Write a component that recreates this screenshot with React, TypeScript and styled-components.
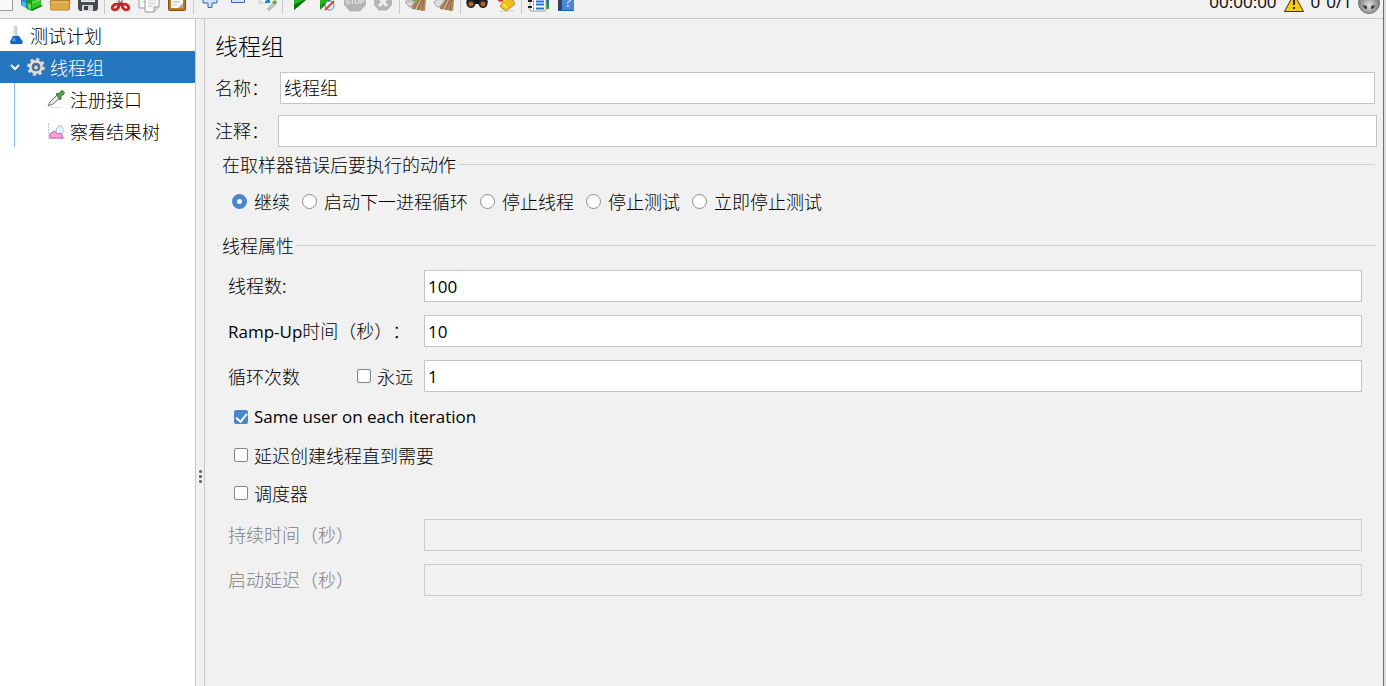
import React, { ReactNode, useState } from "react";
import styled, { createGlobalStyle } from "styled-components";

const GlobalStyle = createGlobalStyle`
  * { box-sizing: border-box; }
  body { margin: 0; background: #f1f1f1; }
  body, button, input {
    font-family: "Noto Sans CJK SC", sans-serif;
    font-size: 18px;
    font-weight: 300;
    color: #000;
    text-spacing-trim: space-all;
  }
`;

const latin = `"Open Sans", "Noto Sans CJK SC", sans-serif`;

const Frame = styled.div`
  display: flex;
  min-height: 100vh;
  background: #dcdcdc;
  padding-right: 2px;
`;
const Window = styled.div`
  flex: 1;
  min-width: 0;
  display: flex;
  flex-direction: column;
  background: #f1f1f1;
  border-right: 1px solid #6e6e6e;
`;
const Toolbar = styled.header`
  display: flex;
  align-items: flex-end;
  height: 19px;
  overflow: hidden;
  border-bottom: 1px solid #c8c8c8;
  padding-right: 3px;
`;
const Tools = styled.div`
  display: flex;
  align-items: flex-end;
  margin-left: -10px;
  padding-bottom: 4px;
`;
const ToolButton = styled.button`
  display: block;
  width: 28px;
  height: 28px;
  padding: 0;
  border: 0;
  background: none;
  svg { display: block; }
`;
const Separator = styled.span`
  width: 1px;
  height: 28px;
  margin: 0 2px;
  background: #c9c9c9;
`;
const Status = styled.div`
  display: flex;
  align-items: flex-end;
  gap: 6px;
  margin-left: auto;
  font-family: ${latin};
  font-size: 17px;
  font-weight: 400;
  line-height: 24px;
  padding-bottom: 4px;
  svg { display: block; }
`;

const Body = styled.div`
  flex: 1;
  display: flex;
`;
const Sidebar = styled.nav`
  width: 196px;
  flex: none;
  background: #fff;
  border-right: 1px solid #c8c8c8;
`;
const TreeItem = styled.a<{ $level: number; $selected?: boolean }>`
  display: flex;
  align-items: center;
  height: 32px;
  gap: 4px;
  padding-left: ${(p) => p.$level}px;
  text-decoration: none;
  color: ${(p) => (p.$selected ? "#fff" : "#000")};
  background: ${(p) => (p.$selected ? "#2675bf" : "transparent")};
  svg { flex: none; }
`;
const TreeBranch = styled.div`
  margin-left: 14px;
  border-left: 1px solid #7fbdee;
`;
const Splitter = styled.div`
  flex: none;
  width: 9px;
  border-right: 1px solid #c8c8c8;
  display: flex;
  flex-direction: column;
  align-items: center;
  justify-content: center;
  gap: 2px;
  padding-top: 248px;
`;
const Dot = styled.span`
  width: 3px;
  height: 3px;
  border-radius: 1px;
  background: #6e6e6e;
`;

const Main = styled.main`
  flex: 1;
  min-width: 0;
  padding: 12px 6px 0 10px;
`;
const Title = styled.h1`
  margin: 0 0 13px;
  font-size: 23px;
  line-height: 28px;
  font-weight: 300;
`;
const HeadRow = styled.div<{ $inset: number }>`
  display: grid;
  grid-template-columns: 63px 1fr;
  align-items: center;
  margin-bottom: 11px;
  label { padding-bottom: 2px; }
  input { margin: 0 ${(p) => p.$inset}px; }
`;
const TextInput = styled.input`
  min-width: 0;
  height: 32px;
  padding: 0 3px 2px;
  border: 1px solid #c4c4c4;
  border-radius: 0;
  background: #fff;
  outline: none;
  &:disabled { background: #f1f1f1; border-color: #cdcdcd; }
`;
const NumberInput = styled(TextInput)`
  padding-bottom: 0;
  font-family: ${latin};
  font-size: 17px;
  font-weight: 400;
`;
const Group = styled.fieldset<{ $top: number }>`
  min-width: 0;
  margin: ${(p) => p.$top}px 2px 0;
  padding: 13px 13px 0 11px;
  border: 0;
  border-top: 1px solid #d0d0d0;
  legend {
    margin-left: -9px;
    padding: 0 3px;
    line-height: 24px;
  }
`;
const Radios = styled.div`
  display: flex;
  flex-wrap: wrap;
  gap: 12px;
  padding-left: 4px;
`;
const Choice = styled.label<{ $gap: number }>`
  display: flex;
  align-items: center;
  gap: ${(p) => p.$gap}px;
  line-height: 24px;
  white-space: nowrap;
`;
const Radio = styled.input.attrs({ type: "radio" })`
  appearance: none;
  width: 15px;
  height: 15px;
  margin: 0;
  border: 1px solid #8c8c8c;
  border-radius: 50%;
  background: #fff;
  &:checked { border: 5px solid #4a87cb; }
`;
const Check = styled.input.attrs({ type: "checkbox" })`
  appearance: none;
  width: 14px;
  height: 14px;
  margin: 0;
  border: 1px solid #858585;
  border-radius: 2px;
  background: #fff;
  &:checked {
    border-color: #4a87cb;
    background: #4a87cb;
    display: grid;
    place-items: center;
  }
  &:checked::before {
    content: "";
    width: 5px;
    height: 9px;
    margin-bottom: 3px;
    border: solid #fff;
    border-width: 0 2px 2px 0;
    transform: rotate(40deg);
  }
`;
const Field = styled.div<{ $disabled?: boolean }>`
  display: grid;
  grid-template-columns: 196px 1fr;
  align-items: center;
  color: ${(p) => (p.$disabled ? "#808080" : "#000")};
  > label { padding-bottom: 2px; }
`;
const Fields = styled.div`
  display: grid;
  gap: 13px;
`;
const LoopLabel = styled.div`
  display: flex;
  justify-content: space-between;
  padding-right: 11px;
`;
const Checks = styled.div`
  display: grid;
  grid-auto-rows: 38px;
  justify-content: start;
  margin: 6px 0 7px;
  padding-left: 6px;
`;
const Latin = styled.span`
  font-family: ${latin};
  font-size: 17px;
  font-weight: 400;
`;

/* Toolbar drawings share a 28px square whose bottom edge is y = 14. */
const Art = ({ children }: { children: ReactNode }) => (
  <svg width="28" height="28" viewBox="0 -14 28 28" aria-hidden="true">{children}</svg>
);

const Page = ({ x, y }: { x: number; y: number }) => (
  <g>
    <path d={`M${x} ${y}h14v11l-5 5h-9z`} fill="#fafafa" stroke="#9b9b9b" />
    <path d={`M${x + 14} ${y + 11}h-5v5`} fill="#dedede" stroke="#9b9b9b" />
    <path d={`M${x + 3} ${y + 4}h8M${x + 3} ${y + 7}h8M${x + 3} ${y + 10}h5`} stroke="#c4c4c4" />
  </g>
);

const Broom = () => (
  <g>
    <path d="M10 3C13 3 14 0 15-2l10-1c-2 5-1 9-2 14l-13-2c-1-2-1-4 0-6z" fill="#b58a62" />
    <path d="M12 9c1-3 4-7 6-11M16 10c1-3 3-7 4-11M20 11c0-3 1-8 2-12" stroke="#8a6644" fill="none" />
    <path d="M14 9c1-3 3-6 5-10" stroke="#dec09b" fill="none" />
  </g>
);

const icons: Record<string, ReactNode> = {
  new: <path d="M4.500 -11h18V10.500H4.500z" fill="#fafafa" stroke="#9b9b9b" />,
  templates: (
    <g>
      <path d="M3-8h7V9L3 5z" fill="#1f86d6" /><path d="M4 1l4 2v5L4 5z" fill="#54b4f2" />
      <path d="M8-8h6v19l-5-2z" fill="#129a1c" /><path d="M10 3l3 1v6l-3-2z" fill="#64df4c" />
      <path d="M14-8h9V5l-9 6z" fill="#35c329" /><path d="M23 5l2 1-11 5v-2z" fill="#18801a" />
      <path d="M14 3l8-3" stroke="#87e96c" />
    </g>
  ),
  open: (
    <g>
      <path d="M4-6h8l2 3h10V9H6z" fill="#b27c25" /><path d="M4 1h20l-1 9H5z" fill="#dfa94a" stroke="#b8862e" />
      <path d="M5 2h18" stroke="#f2cc7c" />
    </g>
  ),
  save: (
    <g>
      <path d="M4-9h20V9l-2 2H6L4 9z" fill="#444b51" /><path d="M7-8h14v10H7z" fill="#eceff0" />
      <path d="M8 5h11v6H8z" fill="#cfd3d5" /><path d="M10 6h4v4h-4z" fill="#3c4247" /><path d="M8 0h12" stroke="#b7b7b7" />
    </g>
  ),
  cut: (
    <g>
      <path d="M8-12l8 14-3 2zM19-12L11 2l3 2z" fill="#c3c8cc" stroke="#858b90" />
      <ellipse cx="8.500" cy="7" rx="3.500" ry="2.500" transform="rotate(-35 8.500 7)" fill="#fff" stroke="#d3202a" strokeWidth="3" />
      <ellipse cx="18.500" cy="7" rx="3.500" ry="2.500" transform="rotate(35 18.500 7)" fill="#fff" stroke="#d3202a" strokeWidth="3" />
      <path d="M10 4l3-2h1l3 2-3 2h-1z" fill="#d3202a" />
    </g>
  ),
  copy: <g><Page x={4} y={-8} /><Page x={10} y={-4} /></g>,
  paste: (
    <g>
      <rect x="5.500" y="-10" width="17" height="20.500" rx="1" fill="#b97a22" stroke="#80500f" />
      <path d="M8-7h12V8H8z" fill="#f8f8f8" /><path d="M20 3v5h-5z" fill="#aaa" />
      <path d="M10-1h7M10 2h7M10 5h4" stroke="#bbb" />
    </g>
  ),
  plus: <path d="M12-7h4v6h5v4h-5v4.500h-4V3H7v-4h5z" fill="#cfe2f7" stroke="#3069ad" />,
  minus: <path d="M7.500-1.500h13v4h-13z" fill="#cfe2f7" stroke="#3069ad" />,
  toggle: (
    <g>
      <path d="M4-2l9-3 5 5-5 4z" fill="#f7f7f7" stroke="#c6c6c6" /><path d="M6 2l4 2" stroke="#aaa" strokeDasharray="2 1" />
      <path d="M12-3l4 4M17-2v4h-4" stroke="#1689d9" strokeWidth="2" fill="none" />
      <path d="M23 3l-7 7" stroke="#a0a8a0" strokeWidth="3" /><path d="M22 4l-5 5" stroke="#e3ece2" />
      <path d="M20 2l3 3 2-3-2-2z" fill="#5ca84c" />
    </g>
  ),
  start: <g><path d="M9-10L22 -1 9 10z" fill="#139411" /><path d="M9-7l9 7-9 5z" fill="#29b522" /><path d="M9 10V5l13-6z" fill="#087106" /></g>,
  startNoPause: (
    <g>
      <path d="M7-10L19-1 7 10z" fill="#139411" /><path d="M7-7l9 7-9 5z" fill="#29b522" />
      <circle cx="16.500" cy="5.500" r="4.500" fill="#edf3fa" stroke="#577eaf" /><path d="M12 10l9-9" stroke="#d94242" strokeWidth="2" />
    </g>
  ),
  stop: (
    <g>
      <path d="M9-10h10l6 6v9l-6 6.500H9L3 5v-9z" fill="#b4b4b4" />
      <text x="14" y="4" textAnchor="middle" fontFamily="Liberation Sans" fontWeight="700" fontSize="7" fill="#e8e8e8">STOP</text>
    </g>
  ),
  shutdown: (
    <g>
      <path d="M10-8h8l5 5v8l-5 5.500h-8L5 5v-8z" fill="#b4b4b4" />
      <path d="M10-2l8 8M18-2l-8 8" stroke="#eee" strokeWidth="3" />
    </g>
  ),
  clear: (
    <g>
      <Broom /><path d="M4 1h8v2l-3 4c-3 0-3-2-5-4z" fill="#d9d9d9" stroke="#999" />
      <path d="M10-2h6v3h-5z" fill="#4ac62f" />
    </g>
  ),
  clearAll: (
    <g><Broom /><path d="M4 2l6-4 5 1-2 4-4 4c-3 0-4-2-5-5z" fill="#dedede" stroke="#aaa" /></g>
  ),
  search: (
    <g>
      <path d="M5-6h7l2 4 2-4h7l2 9H3z" fill="#35352f" /><path d="M11 0h6v4h-6z" fill="#111" />
      <circle cx="8" cy="3.500" r="4.500" fill="#222" /><circle cx="20" cy="3.500" r="4.500" fill="#222" />
      <circle cx="8" cy="4" r="2.500" fill="#a9662c" /><circle cx="20" cy="4" r="2.500" fill="#a9662c" />
    </g>
  ),
  resetSearch: (
    <g>
      <path d="M9 11h14" stroke="#ccc" strokeWidth="1" />
      <path d="M11 -1L18-8c3 4 3 8 6 12L15 11c-2-2-4-2-6-5 2-2 3-4 2-7z" fill="#efbd22" stroke="#c88910" />
      <path d="M12 4c1 1 3 3 4 4M13 1l6-6" stroke="#ffe24d" strokeWidth="2" fill="none" />
      <path d="M7 0l4-2 1 3-4 1z" fill="#dc2f2f" />
    </g>
  ),
  functions: (
    <g>
      <path d="M20-8h5V9h-5z" fill="#2c9d31" /><path d="M22-4h3v8h-3z" fill="#2669c9" />
      <rect x="6" y="-9" width="16" height="20" rx="1" fill="#fff" stroke="#999" />
      <path d="M4 1h4M4 7h4" stroke="#222" strokeWidth="2" />
      <path d="M9 1.500h1M9 4.500h1M9 8.500h1M12 1.500h8M12 4.500h8M12 8.500h8" stroke="#1e73dc" strokeWidth="2" />
    </g>
  ),
  help: (
    <g>
      <path d="M6-10h16v21H6z" fill="#4587d9" /><path d="M6-10h4v21H6z" fill="#344353" /><path d="M6 10.500h16" stroke="#2461aa" />
      <text x="16" y="7" textAnchor="middle" fontFamily="Liberation Serif" fontSize="14" fill="#fff">?</text>
    </g>
  ),
};

const toolGroups: [string, string][][] = [
  [["new", "新建"], ["templates", "模板"], ["open", "打开"], ["save", "保存"]],
  [["cut", "剪切"], ["copy", "复制"], ["paste", "粘贴"]],
  [["plus", "展开"], ["minus", "折叠"], ["toggle", "切换"]],
  [["start", "启动"], ["startNoPause", "不停顿启动"], ["stop", "停止"], ["shutdown", "关闭"]],
  [["clear", "清除"], ["clearAll", "清除全部"]],
  [["search", "查找"], ["resetSearch", "重置"]],
  [["functions", "函数助手"], ["help", "帮助"]],
];

const FlaskIcon = () => (
  <svg width="20" height="20" viewBox="0 0 20 20" aria-hidden="true">
    <path d="M8 1h3v8l4 8-1 2H5l-1-2 4-8z" fill="#e8edf0" stroke="#d3d9dd" />
    <path d="M7 11h6l4 6-1 2H5l-1-2z" fill="#1767c2" /><path d="M8 12l-2 4h4z" fill="#59a5ee" /><path d="M10 2v9" stroke="#b1bcc4" />
  </svg>
);
const GearIcon = () => (
  <svg width="20" height="20" viewBox="0 0 20 20" aria-hidden="true">
    <circle cx="10" cy="10" r="7.500" fill="none" stroke="#d8d8d5" strokeWidth="3" strokeDasharray="3 2.890" />
    <circle cx="10" cy="10" r="5.500" fill="#8096af" stroke="#dededb" strokeWidth="3" />
    <circle cx="10" cy="10" r="4" fill="#436b97" stroke="#6d7680" /><circle cx="10" cy="10.500" r="2" fill="#c9d9e8" />
  </svg>
);
const DropperIcon = () => (
  <svg width="20" height="20" viewBox="0 0 20 20" aria-hidden="true">
    <path d="M4 18.500h12" stroke="#dedede" />
    <path d="M2 17l2-4 7-7 3 3-7 6z" fill="#dce5dc" stroke="#747974" />
    <path d="M4 15l8-7" stroke="#fff" />
    <path d="M10 5l2-1 1 1 2-3c2-1 4 1 3 3l-3 2v3l-1 1z" fill="#5a9c4b" stroke="#3c7a32" />
  </svg>
);
const ChartIcon = () => (
  <svg width="20" height="20" viewBox="0 0 20 20" aria-hidden="true">
    <path d="M2.500 2v15.500H19" stroke="#bfc3c7" strokeDasharray="2 1" fill="none" />
    <path d="M4 13l4-3 4 3 3-1 2 5H4z" fill="#f2a6d8" stroke="#d9539e" />
    <path d="M10 11c0-4 2-6 6-6M16 6c2 3 1 6-1 7" stroke="#75a3dd" fill="none" />
    <circle cx="14" cy="9" r="3" fill="#e6effa" />
  </svg>
);
const ChevronIcon = () => (
  <svg width="12" height="10" viewBox="0 0 12 10" aria-hidden="true">
    <path d="M1 3l4 4 4-4" fill="none" stroke="#fff" strokeWidth="2" />
  </svg>
);
const WarningIcon = () => (
  <svg width="22" height="24" viewBox="0 -12 22 24" aria-hidden="true">
    <path d="M11-8L20.500 9.500h-19z" fill="#f8c90d" stroke="#3c3206" strokeWidth="1" strokeLinejoin="round" />
    <path d="M11-3v6M11 5v2" stroke="#2b2505" strokeWidth="2" />
  </svg>
);
const AlienIcon = () => (
  <svg width="22" height="24" viewBox="0 -12 22 24" aria-hidden="true">
    <defs><radialGradient id="ball" cx="50%" cy="60%"><stop offset="0" stopColor="#e2e2e2" /><stop offset="1" stopColor="#7d7d7d" /></radialGradient></defs>
    <circle cx="11" cy="1" r="10.500" fill="url(#ball)" stroke="#777" />
    <path d="M5 3l4 1v3c-3 0-4-2-4-4zM17 3l-4 1v3c3 0 4-2 4-4z" fill="#444" />
  </svg>
);

const errorActions = ["继续", "启动下一进程循环", "停止线程", "停止测试", "立即停止测试"];

export default function App() {
  const [action, setAction] = useState(errorActions[0]);
  return (
    <>
      <GlobalStyle />
      <Frame>
        <Window>
          <Toolbar>
            <Tools>
              {toolGroups.map((group, i) => (
                <React.Fragment key={i}>
                  {i > 0 && <Separator />}
                  {group.map(([id, label]) => (
                    <ToolButton key={id} type="button" aria-label={label}><Art>{icons[id]}</Art></ToolButton>
                  ))}
                </React.Fragment>
              ))}
            </Tools>
            <Status>
              <span>00:00:00</span>
              <WarningIcon />
              <span>0</span>
              <span>0/1</span>
              <AlienIcon />
            </Status>
          </Toolbar>
          <Body>
            <Sidebar>
              <TreeItem href="#plan" $level={6}><FlaskIcon />测试计划</TreeItem>
              <TreeItem href="#group" $level={10} $selected><ChevronIcon /><GearIcon />线程组</TreeItem>
              <TreeBranch>
                <TreeItem href="#request" $level={31}><DropperIcon />注册接口</TreeItem>
                <TreeItem href="#results" $level={31}><ChartIcon />察看结果树</TreeItem>
              </TreeBranch>
            </Sidebar>
            <Splitter><Dot /><Dot /><Dot /></Splitter>
            <Main>
              <Title>线程组</Title>
              <HeadRow $inset={2}>
                <label htmlFor="name">名称：</label>
                <TextInput id="name" defaultValue="线程组" />
              </HeadRow>
              <HeadRow $inset={0}>
                <label htmlFor="comment">注释：</label>
                <TextInput id="comment" />
              </HeadRow>
              <Group $top={-6}>
                <legend>在取样器错误后要执行的动作</legend>
                <Radios>
                  {errorActions.map((name) => (
                    <Choice key={name} $gap={7}>
                      <Radio name="action" checked={action === name} onChange={() => setAction(name)} />
                      {name}
                    </Choice>
                  ))}
                </Radios>
              </Group>
              <Group $top={20}>
                <legend>线程属性</legend>
                <Fields>
                  <Field>
                    <label htmlFor="threads">线程数:</label>
                    <NumberInput id="threads" defaultValue="100" />
                  </Field>
                  <Field>
                    <label htmlFor="ramp"><Latin>Ramp-Up</Latin>时间（秒）：</label>
                    <NumberInput id="ramp" defaultValue="10" />
                  </Field>
                  <Field>
                    <LoopLabel>
                      <label htmlFor="loops">循环次数</label>
                      <Choice $gap={6}><Check />永远</Choice>
                    </LoopLabel>
                    <NumberInput id="loops" defaultValue="1" />
                  </Field>
                </Fields>
                <Checks>
                  <Choice $gap={6}><Check defaultChecked /><Latin>Same user on each iteration</Latin></Choice>
                  <Choice $gap={6}><Check />延迟创建线程直到需要</Choice>
                  <Choice $gap={6}><Check />调度器</Choice>
                </Checks>
                <Fields>
                  <Field $disabled>
                    <label htmlFor="duration">持续时间（秒）</label>
                    <NumberInput id="duration" disabled />
                  </Field>
                  <Field $disabled>
                    <label htmlFor="delay">启动延迟（秒）</label>
                    <NumberInput id="delay" disabled />
                  </Field>
                </Fields>
              </Group>
            </Main>
          </Body>
        </Window>
      </Frame>
    </>
  );
}
